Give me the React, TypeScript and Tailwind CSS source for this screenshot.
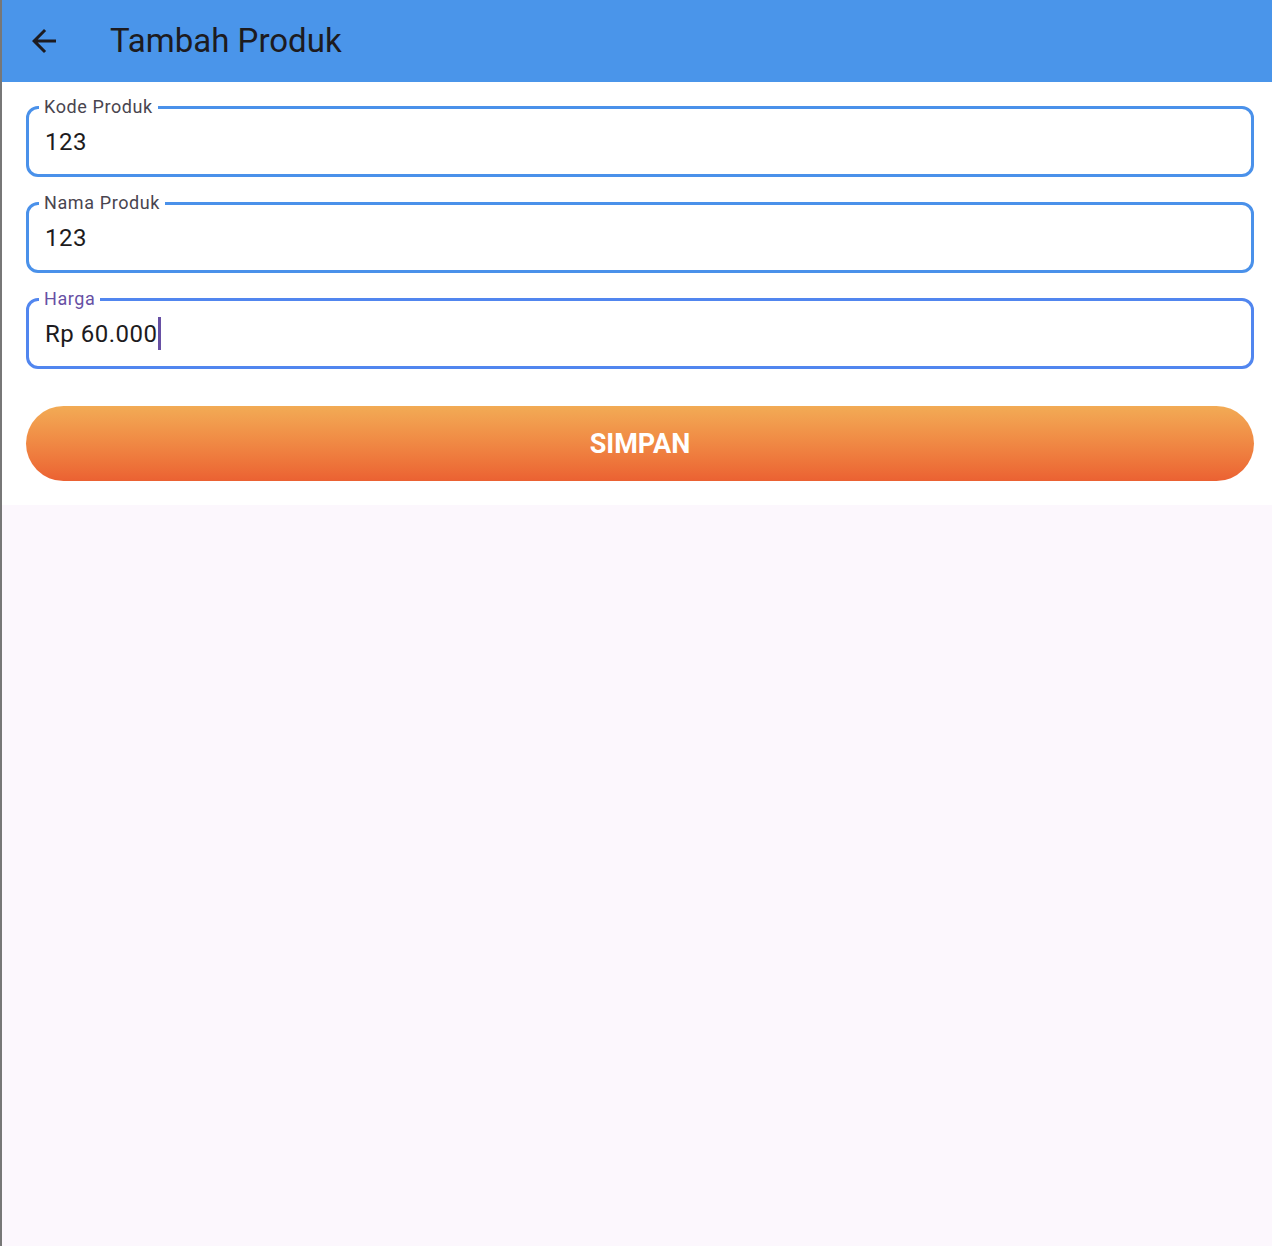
import React from 'react';

type FieldProps = {
  label: string;
  value: string;
  focused?: boolean;
};

const Field: React.FC<FieldProps> = ({ label, value, focused }) => {
  return (
    <div
      className={`relative h-[71px] rounded-[12px] border-[3px] flex items-center pl-[16px] ${
        focused ? 'border-[#5186ef]' : 'border-[#4a91ea]'
      }`}
    >
      <span
        className={`absolute left-[10px] top-[-12px] px-[5px] bg-white text-[18px] leading-[20px] tracking-[0.6px] ${
          focused ? 'text-[#6750a4]' : 'text-[#49454f]'
        }`}
      >
        {label}
      </span>
      <span className="text-[24px] leading-[32px] tracking-[0.5px] text-[#1d1b20]">{value}</span>
      {focused && <span className="w-[3px] h-[33px] bg-[#6750a4]"></span>}
    </div>
  );
};

const App: React.FC = () => {
  return (
    <div
      className="min-h-[1246px] bg-[#fcf7fd] border-l-2 border-[#777777]"
      style={{ fontFamily: 'Roboto, "Noto Sans", sans-serif' }}
    >
      <header className="h-[82px] bg-[#4a95ea] flex items-center">
        <div className="w-[84px] flex justify-center">
          <svg width="36" height="36" viewBox="0 0 24 24" fill="#1d1b20">
            <path d="M20 11H7.83l5.59-5.59L12 4l-8 8 8 8 1.41-1.41L7.83 13H20v-2z" />
          </svg>
        </div>
        <h1 className="ml-[24px] text-[33px] leading-[40px] text-[#1d1b20] font-normal">Tambah Produk</h1>
      </header>

      <main className="bg-white pt-[24px] pb-[24px] pl-[24px] pr-[18px] flex flex-col">
        <div className="flex flex-col gap-[25px]">
          <Field label="Kode Produk" value="123" />
          <Field label="Nama Produk" value="123" />
          <Field label="Harga" value="Rp 60.000" focused />
        </div>
        <button className="mt-[37px] h-[75px] w-full rounded-full bg-gradient-to-b from-[#f2ab55] to-[#eb6132] text-white text-[27px] leading-[77px] font-bold">
          SIMPAN
        </button>
      </main>
    </div>
  );
};

export default App;
